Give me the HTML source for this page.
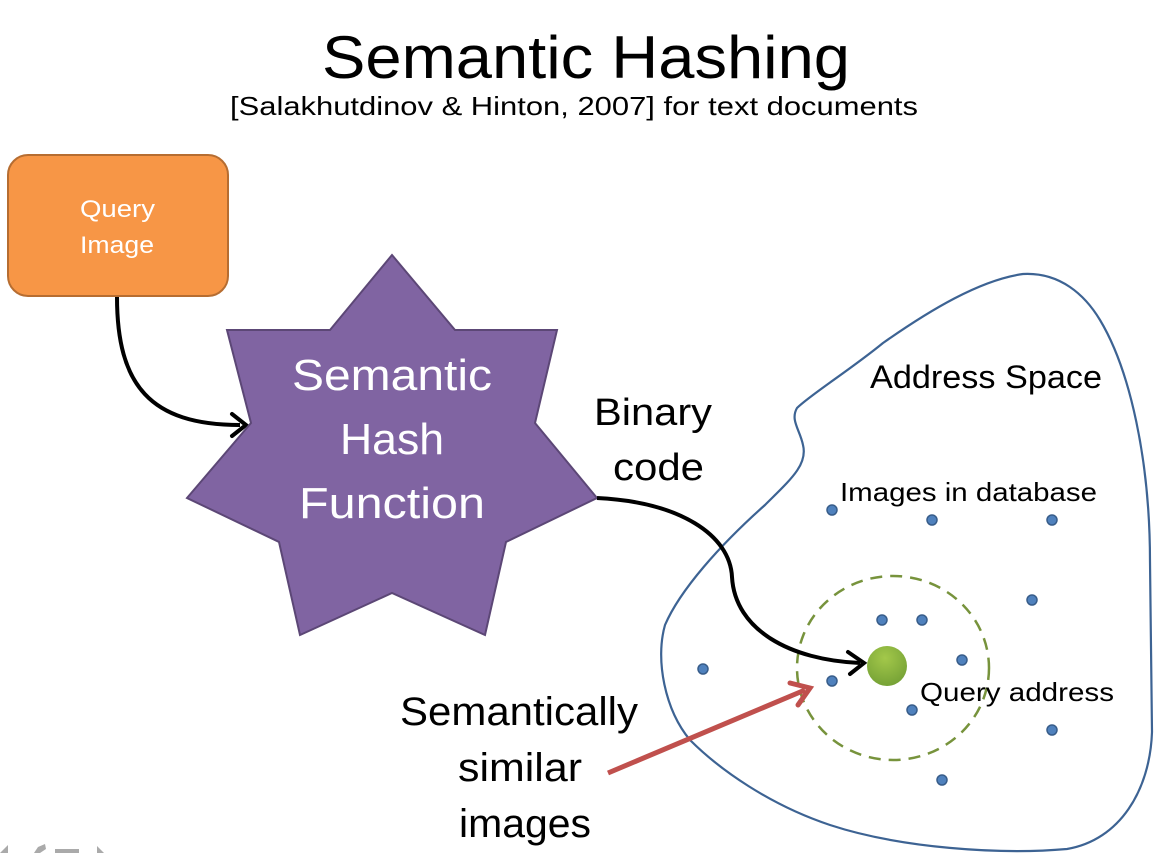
<!DOCTYPE html>
<html><head><style>
html,body{margin:0;padding:0;background:#fff;}
svg{display:block;}
text{font-family:"Liberation Sans",sans-serif;}
</style></head><body>
<svg width="1166" height="853" viewBox="0 0 1166 853" xmlns="http://www.w3.org/2000/svg">
<defs>
<radialGradient id="g" cx="0.45" cy="0.3" r="0.7"><stop offset="0" stop-color="#a3c84a"/><stop offset="1" stop-color="#76a236"/></radialGradient>
</defs>
<text x="322" y="78" font-size="60" textLength="528" lengthAdjust="spacingAndGlyphs" fill="#000">Semantic Hashing</text>
<text x="230" y="115" font-size="26" textLength="688" lengthAdjust="spacingAndGlyphs" fill="#000">[Salakhutdinov &amp; Hinton, 2007] for text documents</text>

<rect x="8" y="155" width="220" height="141" rx="20" fill="#f79646" stroke="#b66d31" stroke-width="2"/>
<text x="80" y="217" font-size="24" textLength="75" lengthAdjust="spacingAndGlyphs" fill="#fff">Query</text>
<text x="80" y="253" font-size="24" textLength="74" lengthAdjust="spacingAndGlyphs" fill="#fff">Image</text>

<path d="M117,297 C117,385 150,425 240,425" fill="none" stroke="#000" stroke-width="4"/>
<path d="M232,414 L246,425 L232,436" fill="none" stroke="#000" stroke-width="4" stroke-linecap="round"/>

<polygon points="392,255 455,330 557,330 535,423 597,498 506,542 485,635 392,593 300,635 279,542 187,498 251,423 227,330 330,330" fill="#8064a2" stroke="#5c4776" stroke-width="2"/>
<text x="292" y="390" font-size="44" textLength="200" lengthAdjust="spacingAndGlyphs" fill="#fff">Semantic</text>
<text x="340" y="454" font-size="44" textLength="104" lengthAdjust="spacingAndGlyphs" fill="#fff">Hash</text>
<text x="299" y="518" font-size="44" textLength="186" lengthAdjust="spacingAndGlyphs" fill="#fff">Function</text>

<text x="594" y="425" font-size="38" textLength="118" lengthAdjust="spacingAndGlyphs" fill="#000">Binary</text>
<text x="613" y="480" font-size="38" textLength="91" lengthAdjust="spacingAndGlyphs" fill="#000">code</text>

<path d="M1023,274 C1060,272 1085,295 1100,320 C1130,370 1150,460 1150,562 L1152,732 C1150,790 1120,840 1067,849 C1000,855 900,848 830,825 C770,805 720,770 690,740 C665,710 655,660 665,625 C680,590 720,545 765,505 C790,480 808,465 803,445 C800,430 790,420 797,408 C810,395 850,370 883,343 C930,310 980,280 1023,274 Z" fill="none" stroke="#3d6393" stroke-width="2.2"/>

<text x="870" y="388" font-size="32" textLength="232" lengthAdjust="spacingAndGlyphs" fill="#000">Address Space</text>
<text x="840" y="501" font-size="26" textLength="257" lengthAdjust="spacingAndGlyphs" fill="#000">Images in database</text>

<ellipse cx="893" cy="668" rx="96" ry="92" fill="none" stroke="#77933c" stroke-width="2.5" stroke-dasharray="12,8"/>

<g fill="#4f81bd" stroke="#385d8a" stroke-width="1.5">
<ellipse cx="832" cy="510" rx="5" ry="5"/>
<ellipse cx="932" cy="520" rx="5" ry="5"/>
<ellipse cx="1052" cy="520" rx="5" ry="5"/>
<ellipse cx="1032" cy="600" rx="5" ry="5"/>
<ellipse cx="882" cy="620" rx="5" ry="5"/>
<ellipse cx="922" cy="620" rx="5" ry="5"/>
<ellipse cx="962" cy="660" rx="5" ry="5"/>
<ellipse cx="703" cy="669" rx="5" ry="5"/>
<ellipse cx="832" cy="681" rx="5" ry="5"/>
<ellipse cx="912" cy="710" rx="5" ry="5"/>
<ellipse cx="1052" cy="730" rx="5" ry="5"/>
<ellipse cx="942" cy="780" rx="5" ry="5"/>
</g>

<path d="M597,498 C680,502 730,535 732,577 C735,630 790,660 860,663" fill="none" stroke="#000" stroke-width="4"/>
<path d="M848,652 L864,663 L850,674" fill="none" stroke="#000" stroke-width="4" stroke-linecap="round"/>

<ellipse cx="887" cy="666" rx="20" ry="20" fill="url(#g)"/>
<text x="920" y="701" font-size="26" textLength="194" lengthAdjust="spacingAndGlyphs" fill="#000">Query address</text>

<line x1="608" y1="773" x2="805" y2="690" stroke="#c0504d" stroke-width="5"/>
<path d="M790,683 L810,688 L798,705" fill="none" stroke="#c0504d" stroke-width="5" stroke-linecap="round"/>

<text x="400" y="725" font-size="40" textLength="238" lengthAdjust="spacingAndGlyphs" fill="#000">Semantically</text>
<text x="458" y="781" font-size="40" textLength="124" lengthAdjust="spacingAndGlyphs" fill="#000">similar</text>
<text x="459" y="837" font-size="40" textLength="132" lengthAdjust="spacingAndGlyphs" fill="#000">images</text>

<g fill="#aaa">
<polygon points="0,853 8,845 8,853"/>
<polygon points="38,847 45,844 46,849 40,853 34,853"/>
<rect x="55" y="849" width="24" height="4"/>
<polygon points="97,846 104,853 97,853"/>
</g>
</svg>
</body></html>
